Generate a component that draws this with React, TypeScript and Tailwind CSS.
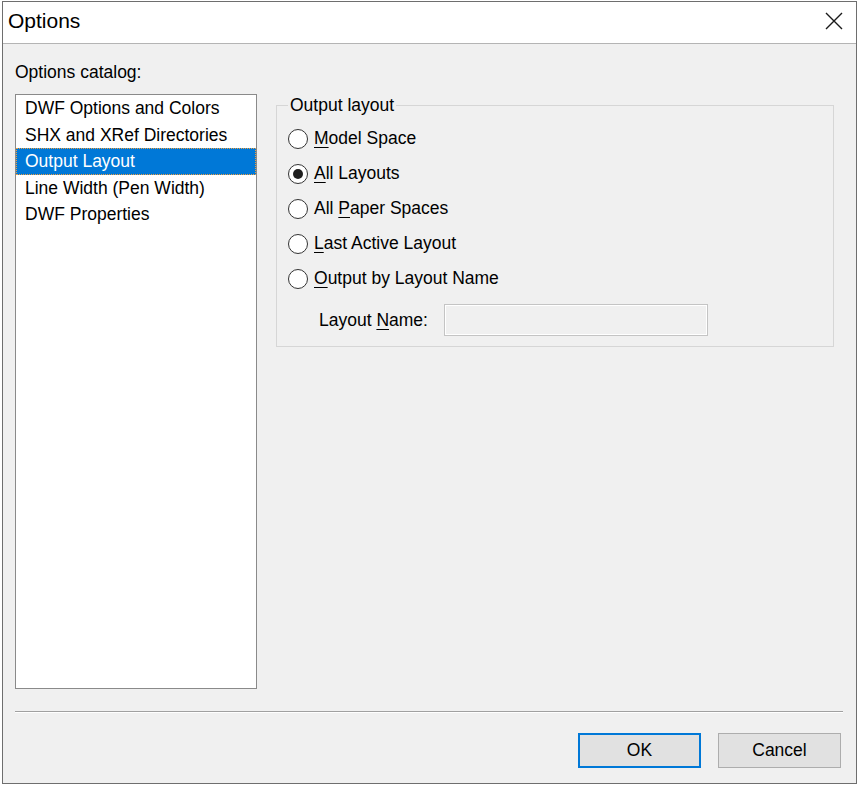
import React from 'react';

const catalog = [
  'DWF Options and Colors',
  'SHX and XRef Directories',
  'Output Layout',
  'Line Width (Pen Width)',
  'DWF Properties',
];

type RadioItem = { before: string; key: string; after: string };

const radios: RadioItem[] = [
  { before: '', key: 'M', after: 'odel Space' },
  { before: '', key: 'A', after: 'll Layouts' },
  { before: 'All ', key: 'P', after: 'aper Spaces' },
  { before: '', key: 'L', after: 'ast Active Layout' },
  { before: '', key: 'O', after: 'utput by Layout Name' },
];

const Mnemonic = ({ children }: { children: React.ReactNode }) => (
  <span className="underline decoration-1 underline-offset-[3px]">{children}</span>
);

const CloseIcon = () => (
  <svg width="18" height="18" viewBox="0 0 18 18" fill="none">
    <path d="M1 1 L17 17 M17 1 L1 17" stroke="#1a1a1a" strokeWidth="1.4" />
  </svg>
);

const Radio = ({ checked }: { checked: boolean }) => (
  <span className="flex h-[20px] w-[20px] shrink-0 items-center justify-center rounded-full border border-[#333333] bg-white">
    {checked && <span className="h-[10px] w-[10px] rounded-full bg-[#1f1f1f]" />}
  </span>
);

export default function App() {
  const [selected, setSelected] = React.useState(2);
  const [layout, setLayout] = React.useState(1);

  return (
    <div className="h-[787px] w-[859px] overflow-hidden bg-white pl-[2px] pt-[1px] font-['Liberation_Sans',Arial,sans-serif] text-[17.5px] text-black">
      <div className="flex h-[783px] w-[855px] flex-col border border-[#6e6e6e] bg-[#f0f0f0]">
        {/* title bar */}
        <div className="flex h-[42px] shrink-0 items-center justify-between border-b border-[#b4b4b4] bg-white pb-[3px] pl-[5px] pr-[13px]">
          <span className="text-[21px]">Options</span>
          <CloseIcon />
        </div>

        <div className="flex flex-col pl-[12px] pt-[18px]">
          <div className="flex items-start gap-[19px]">
            <div className="flex flex-col">
              <div className="h-[20px] leading-[20px]">Options catalog:</div>
              <div className="mt-[12px] h-[595px] w-[242px] border border-[#8a8a8a] bg-white">
                {catalog.map((item, i) => (
                  <div
                    key={item}
                    onClick={() => setSelected(i)}
                    className={
                      i === selected
                        ? 'flex h-[26.5px] items-center border border-dotted border-[#f0a040] bg-[#0078d7] pl-[8px] text-white'
                        : 'flex h-[26.5px] items-center border border-transparent pl-[8px]'
                    }
                  >
                    {item}
                  </div>
                ))}
              </div>
            </div>

            <fieldset className="mt-[33px] w-[558px] border border-[#d6d6d6] pb-[10px] pl-[11px]">
              <legend className="px-[2px] leading-[20px]">Output layout</legend>
              <div className="mt-[6px] flex flex-col">
                {radios.map((r, i) => (
                  <div
                    key={r.key}
                    onClick={() => setLayout(i)}
                    className="flex h-[35px] items-center gap-[6px]"
                  >
                    <Radio checked={layout === i} />
                    <span>
                      {r.before}
                      <Mnemonic>{r.key}</Mnemonic>
                      {r.after}
                    </span>
                  </div>
                ))}
              </div>
              <div className="mt-[8px] flex items-center pl-[31px]">
                <span className="w-[125px]">
                  Layout <Mnemonic>N</Mnemonic>ame:
                </span>
                <div className="h-[32px] w-[264px] border border-[#c4c4c4] bg-[#f0f0f0] shadow-[inset_0_0_0_1px_#ffffff]" />
              </div>
            </fieldset>
          </div>

          <div className="mt-[22px] mr-[13px] border-t border-b border-t-[#a0a0a0] border-b-white" />

          <div className="mt-[20px] flex justify-end gap-[17px] pr-[15px]">
            <button className="h-[35px] w-[123px] border-2 border-[#0078d7] bg-[#e1e1e1]">OK</button>
            <button className="h-[35px] w-[123px] border border-[#adadad] bg-[#e1e1e1]">Cancel</button>
          </div>
        </div>
      </div>
    </div>
  );
}
